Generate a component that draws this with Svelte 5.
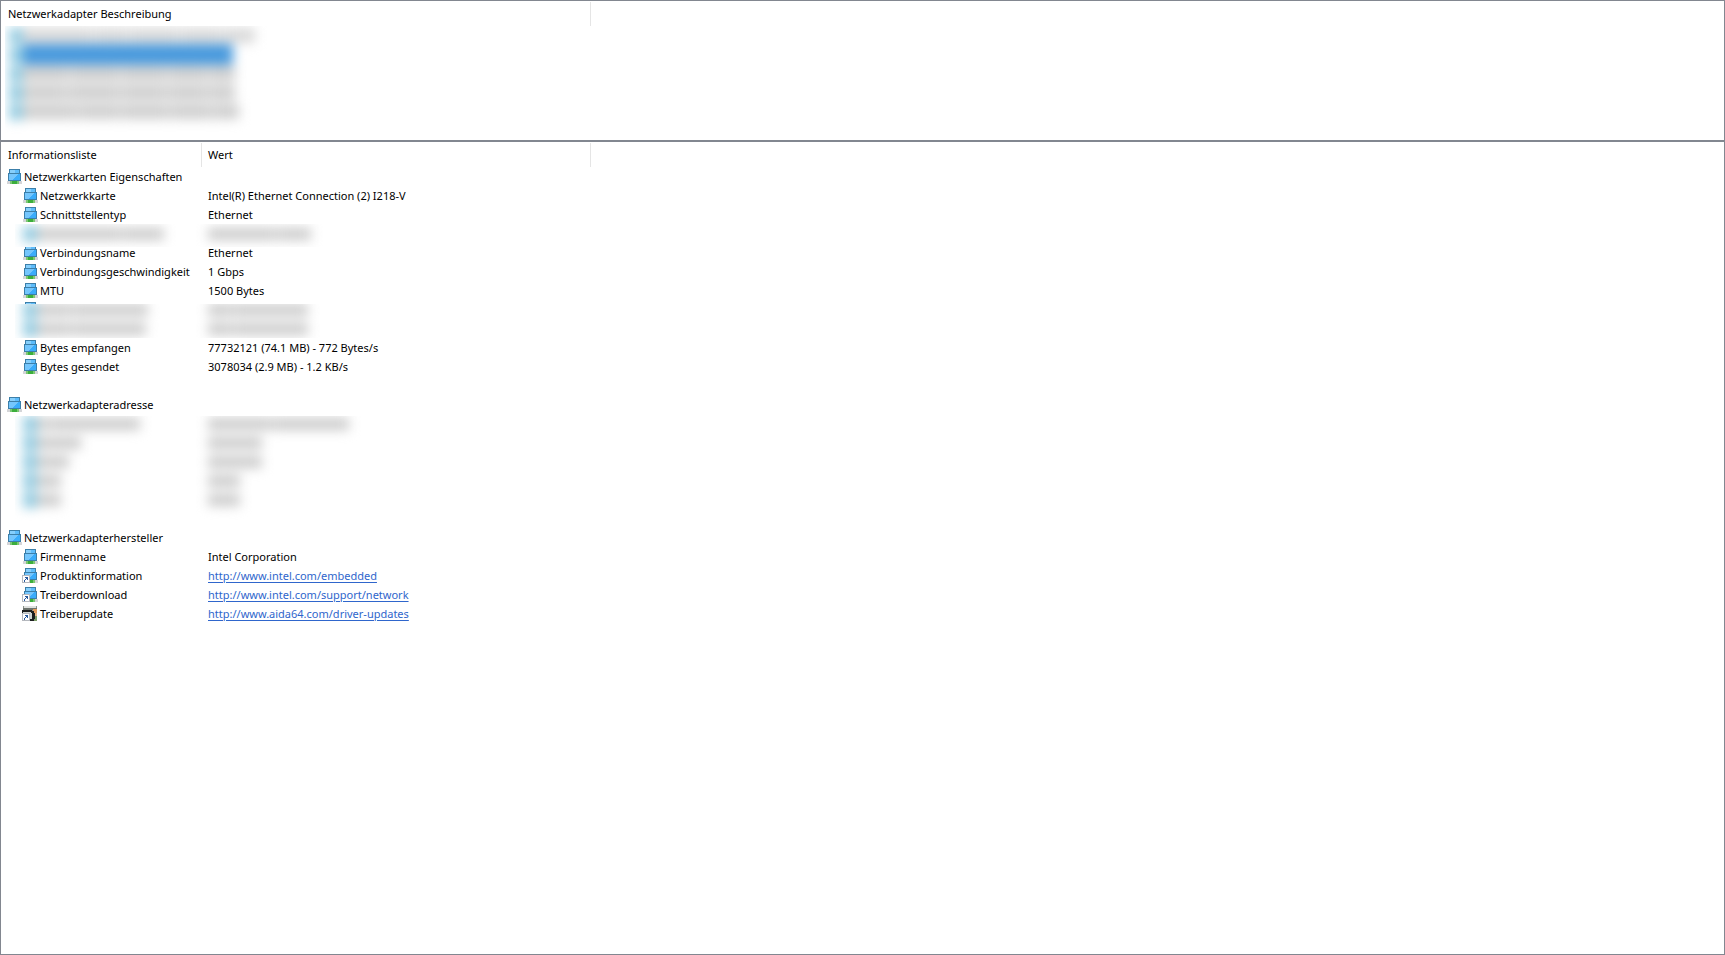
<svelte:options runes={true} />
<script>
  const adapters = [
    { parts: [70, 34, 50, 42, 32], c: '#dadada' },
    { parts: [210], c: '#4799dd', selected: true },
    { parts: [46, 50, 46, 40, 26], c: '#cfcfcf' },
    { parts: [44, 52, 46, 40, 26], c: '#cfcfcf' },
    { parts: [54, 42, 48, 42, 26], c: '#cfcfcf' }
  ];
  const rows = [
    { label: 'Netzwerkkarten Eigenschaften', group: true },
    { label: 'Netzwerkkarte', value: 'Intel(R) Ethernet Connection (2) I218-V' },
    { label: 'Schnittstellentyp', value: 'Ethernet' },
    { masked: [[[84, 42], [68, 34]]], kind: 'one' },
    { label: 'Verbindungsname', value: 'Ethernet' },
    { label: 'Verbindungsgeschwindigkeit', value: '1 Gbps' },
    { label: 'MTU', value: '1500 Bytes' },
    { masked: [[[34, 76], [24, 75]], [[34, 74], [24, 75]]], kind: 'two' },
    { label: 'Bytes empfangen', value: '77732121 (74.1 MB) - 772 Bytes/s' },
    { label: 'Bytes gesendet', value: '3078034 (2.9 MB) - 1.2 KB/s' },
    { blank: true },
    { label: 'Netzwerkadapteradresse', group: true },
    { masked: [[[12, 90], [64, 76]], [[44], [54]], [[32], [54]], [[24], [32]], [[24], [32]]], kind: 'five' },
    { blank: true },
    { label: 'Netzwerkadapterhersteller', group: true },
    { label: 'Firmenname', value: 'Intel Corporation' },
    { label: 'Produktinformation', value: 'http://www.intel.com/embedded', link: true, icon: 'shortcut' },
    { label: 'Treiberdownload', value: 'http://www.intel.com/support/network', link: true, icon: 'shortcut' },
    { label: 'Treiberupdate', value: 'http://www.aida64.com/driver-updates', link: true, icon: 'update' }
  ];
</script>

{#snippet icon(kind)}
  <svg class="icon" viewBox="0 0 16 16" aria-hidden="true" shape-rendering="crispEdges">
    {#if kind === 'update'}
      <rect x="0" y="0" width="14" height="15" fill="#8b918a" />
      <rect x="1" y="0" width="12" height="2" fill="#dfe1df" />
      <rect x="0" y="2" width="14" height="2" fill="#6d736d" />
      <rect x="10" y="3" width="4" height="4" fill="#e39a5a" />
      <rect x="12" y="7" width="2" height="3" fill="#e8b487" />
      <rect x="11" y="10" width="3" height="5" fill="#7c9a68" />
      <path d="M-1 4h10v1h2v2h1v6h-1v2H7v-3H-1z" fill="#1d1f1f" />
      <path d="M0 6h8v1h1v6H7V8H0z" fill="#cfd3d1" />
    {:else}
      <rect x="0" y="12" width="15" height="3" fill="#d4d5d8" />
      <rect x="3" y="12" width="9" height="3" fill="#7cc873" />
      <rect x="5" y="12" width="5" height="3" fill="#3cae3c" />
      <rect x="2" y="0" width="11" height="5" fill="#3c7fa9" />
      <rect x="3" y="1" width="9" height="3" fill="#5dbcfb" />
      <rect x="3" y="1" width="5" height="3" fill="#86cffc" />
      <rect x="1" y="4" width="13" height="8" fill="#3c7fa9" />
      <rect x="2" y="5" width="11" height="6" fill="#3aacfb" />
      <path d="M2 5h9l-6 6H2z" fill="#74c6fd" />
    {/if}
    {#if kind}
      <rect x="-1" y="7" width="8" height="8" fill="#b5b8be" />
      <rect x="0" y="8" width="6" height="6" fill="#fff" />
      <path d="M2 9h3v3H4v-1H3v1H2v2H1v-2h1v-1h1v-1H2z" fill="#285a9e" />
    {/if}
  </svg>
{/snippet}

<main>
  <section class="panel">
    <table>
      <colgroup><col class="wide" /><col /></colgroup>
      <thead><tr><th>Netzwerkadapter Beschreibung</th><td></td></tr></thead>
      <tbody>
        <tr><td>
          <div class="mask list">
            <div class="soft">
              {#each adapters as a}
                <div class="line" class:selected={a.selected}>
                  <i class="dot"></i>
                  <span class="words">{#each a.parts as w}<i class="bar" style="width: {w}px; background: {a.c}"></i>{/each}</span>
                </div>
              {/each}
            </div>
          </div>
        </td><td></td></tr>
      </tbody>
    </table>
  </section>

  <section class="panel info">
    <table>
      <colgroup><col class="name" /><col class="value" /><col /></colgroup>
      <thead><tr><th>Informationsliste</th><th class="second">Wert</th><td></td></tr></thead>
      <tbody>
        {#each rows as row}
          {#if row.masked}
            <tr class={row.kind}>
              <td>
                {#if row.kind === 'two'}<div class="peek">{@render icon()}</div>{/if}
                <div class="mask names"><div class="soft">
                  {#each row.masked as m}
                    <div class="line">
                      <i class="dot"></i>
                      <span class="words">{#each m[0] as w}<i class="bar" style="width: {w}px"></i>{/each}</span>
                    </div>
                  {/each}
                </div></div>
              </td>
              <td>
                <div class="mask values"><div class="soft">
                  {#each row.masked as m}
                    <div class="line">
                      <span class="words">{#each m[1] as w}<i class="bar" style="width: {w}px"></i>{/each}</span>
                    </div>
                  {/each}
                </div></div>
              </td>
              <td></td>
            </tr>
          {:else if row.blank}
            <tr><td colspan="3"></td></tr>
          {:else}
            <tr>
              <td class:child={!row.group}><span class="item">{@render icon(row.icon)}{row.label}</span></td>
              <td class="data">{#if row.link}<a href={row.value}>{row.value}</a>{:else}{row.value ?? ''}{/if}</td>
              <td></td>
            </tr>
          {/if}
        {/each}
      </tbody>
    </table>
  </section>
</main>

<style>
  :global(body) { margin: 0; background: #fff; }
  main {
    display: flex;
    flex-direction: column;
    min-height: 100vh;
    font: 11px/19px "Noto Sans", "Open Sans", sans-serif;
    color: #000;
  }
  .panel { box-sizing: border-box; border: 1px solid #828790; padding-top: 1px; }
  .info { flex: 1; }
  table { width: 100%; border-collapse: separate; border-spacing: 0; table-layout: fixed; }
  .wide { width: 590px; }
  .name { width: 201px; }
  .value { width: 389px; }
  th, td { padding: 0; text-align: left; font-weight: 400; white-space: nowrap; }
  th { box-sizing: border-box; height: 24px; padding: 0 0 2px 7px; border-right: 1px solid #e5e5e5; }
  th.second { padding-left: 6px; }
  tbody td { height: 19px; vertical-align: top; }
  .item { display: flex; align-items: center; gap: 1px; height: 19px; padding-left: 6px; }
  .child .item { padding-left: 22px; }
  .data { padding-left: 6px; }
  .icon { display: block; flex: none; width: 16px; height: 16px; overflow: visible; }
  a { color: #2f66cc; text-decoration: underline; text-underline-offset: 2px; }

  .mask { position: relative; overflow: hidden; background: #fff; }
  .soft { filter: blur(6px); }
  .line { display: flex; align-items: center; height: 19px; }
  .words { display: flex; gap: 1px; }
  .dot { width: 14px; height: 16px; background: #93cce2; }
  .bar { height: 12px; background: #cbcbcb; }
  .list { height: 114px; margin-left: 4px; }
  .list .soft { padding-left: 4px; }
  .list .bar { height: 15px; }
  .list .selected .bar { height: 21px; }
  .names { margin-left: 14px; }
  .names .soft { padding-left: 8px; }
  .values { margin-left: -16px; }
  .values .soft { padding-left: 22px; }
  .one .mask { height: 23px; margin-bottom: -4px; }
  .two .mask { height: 34px; }
  .two .soft { margin-top: -4px; }
  .two .values { margin-top: 4px; }
  .peek { height: 4px; padding-left: 22px; overflow: hidden; }
  .peek .icon { margin-top: 2px; }
  .five .mask { height: 93px; margin-top: 2px; padding-bottom: 12px; margin-bottom: -12px; }
  .five .soft { margin-top: -2px; }
</style>
